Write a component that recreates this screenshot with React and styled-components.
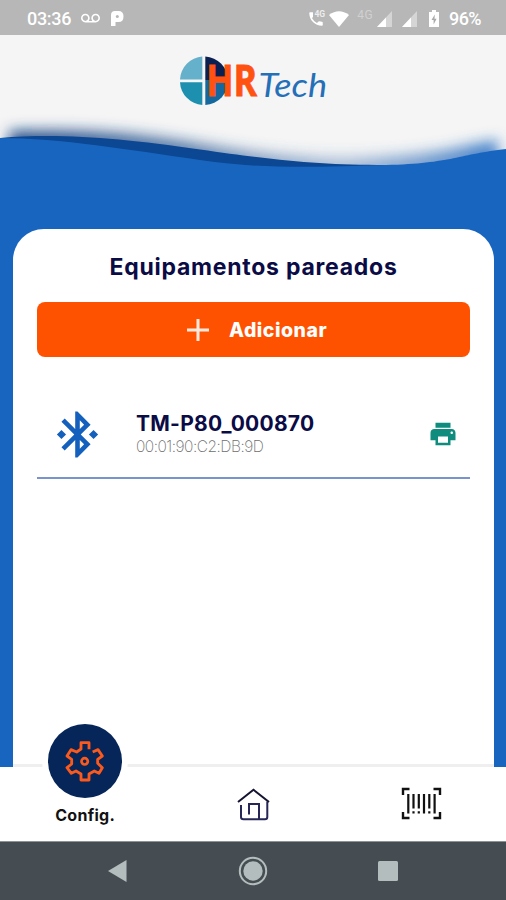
import React from "react";
import styled, { createGlobalStyle } from "styled-components";
import {
  MdBluetoothConnected,
  MdPrint,
  MdVoicemail,
  MdPhoneInTalk,
} from "react-icons/md";

const GlobalStyle = createGlobalStyle`
  * {
    box-sizing: border-box;
  }

  body {
    margin: 0;
    background: #1865c0;
    font-family: Inter, "Liberation Sans", sans-serif;
  }
`;

const Screen = styled.div`
  display: flex;
  flex-direction: column;
  width: 506px;
  height: 900px;
  overflow: hidden;
  background: #1865c0;
`;

const StatusBar = styled.div`
  display: flex;
  flex: none;
  align-items: center;
  justify-content: space-between;
  height: 35px;
  padding: 2px 25px 0 27px;
  background: #b7b7b7;
  color: #fff;
  font-family: Roboto, sans-serif;
`;

const StatusGroup = styled.div`
  display: flex;
  align-items: center;
`;

const StatusText = styled.span`
  font-size: 18px;
  font-weight: 500;
  line-height: 20px;
  letter-spacing: ${(props) => props.$spacing || "-0.3px"};
`;

const StatusIcon = styled.span`
  display: flex;
  align-items: center;
  margin-left: ${(props) => props.$gap}px;
`;

const CallIcon = styled(StatusIcon)`
  position: relative;
  width: 18px;
  height: 18px;
`;

const CallTag = styled.span`
  position: absolute;
  top: 0;
  right: 0;
  padding-left: 1px;
  background: #b7b7b7;
  color: #ececec;
  font-size: 8.5px;
  font-weight: 700;
  line-height: 9px;
`;

const Network = styled.span`
  margin: -7px 0 0 8px;
  color: #d0d0d0;
  font-size: 12px;
  letter-spacing: 0.5px;
`;

const Header = styled.header`
  display: flex;
  flex: none;
  justify-content: center;
  height: 75px;
  padding: 20px 0 0 2px;
  background: #f5f5f5;
`;

const LogoSvg = styled.svg`
  width: 150px;
  height: 55px;
  overflow: visible;
`;

const Wave = styled.svg`
  display: block;
  flex: none;
  width: 506px;
  height: 62px;
`;

const Card = styled.main`
  flex: none;
  width: 481px;
  height: 538px;
  margin: 57px 0 0 13px;
  padding: 23px 24px 0;
  background: #fff;
  border-bottom: 3px solid #efefef;
  border-radius: 31px 31px 0 0;
`;

const Title = styled.h1`
  margin: 0;
  color: #0b0b45;
  font-size: 23px;
  font-weight: 700;
  line-height: 31px;
  letter-spacing: 0.75px;
  text-align: center;
  white-space: nowrap;
`;

const AddButton = styled.button`
  display: flex;
  align-items: center;
  width: 433px;
  height: 55px;
  margin-top: 19px;
  padding: 0 0 0 149px;
  border: none;
  border-radius: 8px;
  background: #ff5200;
  color: #fff;
  font-family: inherit;
  font-size: 19.5px;
  font-weight: 800;
  letter-spacing: 0.5px;
`;

const PlusIcon = styled.svg`
  width: 24px;
  height: 24px;
  margin-right: 19px;
`;

const Device = styled.div`
  display: flex;
  align-items: center;
  height: 88px;
  margin-top: 34px;
  padding: 0 12px 0 13px;
  border-bottom: 2px solid #7b93cc;
`;

const DeviceInfo = styled.div`
  flex: 1;
  margin: 2px 0 0 31px;
`;

const DeviceName = styled.div`
  color: #0b0b45;
  font-size: 21px;
  font-weight: 700;
  line-height: 24px;
  letter-spacing: 0.25px;
`;

const DeviceAddress = styled.div`
  color: #6d6d6d;
  font-size: 15.5px;
  font-weight: 200;
  line-height: 22px;
  letter-spacing: -0.5px;
`;

const TabBar = styled.nav`
  display: grid;
  flex: none;
  grid-template-columns: repeat(3, 1fr);
  height: 74px;
  padding-left: 1px;
  background: #fff;
`;

const Tab = styled.div`
  display: flex;
  flex-direction: column;
  align-items: center;
  padding-top: ${(props) => (props.$active ? "0" : "20px")};
`;

const ActiveCircle = styled.div`
  display: flex;
  flex: none;
  align-items: center;
  justify-content: center;
  position: relative;
  width: 74px;
  height: 74px;
  margin-top: -43px;
  border-radius: 50%;
  background: #06265a;
  box-shadow: 0 0 0 6px #fff;
`;

const TabLabel = styled.span`
  position: relative;
  margin-top: 7px;
  color: #111;
  font-size: 16px;
  font-weight: 700;
  line-height: 20px;
  letter-spacing: 0.3px;
`;

const SystemBar = styled.div`
  display: flex;
  flex: 1;
  align-items: center;
  justify-content: space-between;
  padding: 0 108px 1px 108px;
  border-top: 1px solid #8d9294;
  background: #454d53;
`;

const Logo = () => (
  <LogoSvg viewBox="0 0 150 55">
    <path d="M23.3 24.4H1A24 24 0 0 1 23.3 1.5Z" fill="#65b0ca" />
    <path d="M23.3 27.2H1A24 24 0 0 0 23.3 50Z" fill="#1c90ae" />
    <path d="M26.3 25H49A24 24 0 0 0 26.3 1.5Z" fill="#0b1f50" />
    <path d="M26.3 25H49A24 24 0 0 1 26.3 50Z" fill="#14689d" />
    <text
      x="27.2"
      y="41.4"
      textLength="51"
      lengthAdjust="spacingAndGlyphs"
      fontFamily="Open Sans, sans-serif"
      fontSize="43"
      fontWeight="700"
      fill="#ff5110"
      stroke="#ff5110"
      strokeWidth="0.8"
    >
      HR
    </text>
    <text
      x="79.5"
      y="42"
      textLength="68.5"
      lengthAdjust="spacingAndGlyphs"
      fontFamily="Lato, sans-serif"
      fontSize="33"
      fontStyle="italic"
      fill="#246fb8"
    >
      Tech
    </text>
  </LogoSvg>
);

const HeaderWave = () => (
  <Wave viewBox="0 110 506 62">
    <defs>
      <linearGradient id="shade" x1="0" x2="1" y1="0" y2="0">
        <stop offset="0" stopColor="#123f80" stopOpacity="0.9" />
        <stop offset="0.35" stopColor="#1d4d8c" stopOpacity="0.7" />
        <stop offset="0.68" stopColor="#3e6fae" stopOpacity="0.4" />
        <stop offset="1" stopColor="#1865c0" stopOpacity="0.8" />
      </linearGradient>
      <filter id="soft" x="-5%" y="-60%" width="110%" height="220%">
        <feGaussianBlur stdDeviation="7" />
      </filter>
    </defs>
    <rect y="110" width="506" height="62" fill="#f5f5f5" />
    <path
      d="M9 131C70 128 130 131 200 143S320 160 386 156S460 145 498 140V190H9Z"
      fill="url(#shade)"
      filter="url(#soft)"
    />
    <path
      d="M0 138C60 133 120 138 200 149.5S320 165 386 165V172H0Z"
      fill="#0b4792"
    />
    <path
      d="M0 138C60 138 130 150 200 160S320 166.5 386 165S460 154 506 149V172H0Z"
      fill="#1865c0"
    />
  </Wave>
);

const WifiIcon = () => (
  <svg width="20" height="16" viewBox="0 0 20 16">
    <path d="M0 4Q10-3.5 20 4L10 16Z" fill="#fff" />
  </svg>
);

const SignalIcon = () => (
  <svg width="15" height="16" viewBox="0 0 15 16">
    <path d="M15 0V16H0Z" fill="#d5d5d5" />
    <path d="M9 6.5V16H0Z" fill="#fff" />
  </svg>
);

const BatteryIcon = () => (
  <svg width="10" height="17" viewBox="0 0 10 17">
    <path d="M3 0H7V2H10V17H0V2H3Z" fill="#fff" />
    <path d="M5.8 4.5L2.5 10H4.6V14.5L7.6 8.8H5.5Z" fill="#aaa" />
  </svg>
);

const ParkingIcon = () => (
  <svg width="13" height="15" viewBox="0 0 13 15">
    <path
      d="M0 15V4Q0 0 4 0H7.5Q12.5 0 12.5 5.5T7.5 11H4.5V15Z"
      fill="#fff"
    />
    <circle cx="6.3" cy="5.6" r="1.5" fill="#b7b7b7" />
  </svg>
);

const GearIcon = () => (
  <svg width="40" height="42" viewBox="0 0 120 126">
    <path
      d="M72 28V8H48V27L35 36L18 29L6 48L20 58V72L6 83L19 100L33 93L48 102V120H72V102L88 93L102 100L112 83L98 70V58L112 48L99 29L83 36"
      fill="none"
      stroke="#fb5a1c"
      strokeWidth="8.5"
      strokeLinejoin="round"
    />
    <circle cx="59" cy="64" r="9.5" fill="none" stroke="#fb5a1c" strokeWidth="8" />
  </svg>
);

const HomeIcon = () => (
  <svg width="35" height="35" viewBox="0 0 35 35" fill="none" strokeWidth="2">
    <path
      d="M5 18V30Q5 32.3 7.5 32.3H29Q31.3 32.3 31.3 30V14.5M23 32V17H13V27.5"
      stroke="#262657"
    />
    <path d="M2 15L17.5 2.8L33 15" stroke="#141432" />
  </svg>
);

const BarcodeIcon = () => (
  <svg width="41" height="33" viewBox="0 0 41 33" fill="none" stroke="#111">
    <path
      d="M2 8V2H8.5M32.5 2H39V8M39 25V31H32.5M8.5 31H2V25"
      strokeWidth="2.4"
    />
    <path
      d="M7.3 7V26.5M12.5 7V21.5M17.8 7V21.5M23 7V26.5M28.3 7V21.5M33.6 7V26.5M12.5 24.3V26.5M17.8 24.3V26.5M28.3 24.3V26.5"
      strokeWidth="2.2"
    />
  </svg>
);

const App = () => {
  return (
    <>
      <GlobalStyle />
      <Screen>
        <StatusBar>
          <StatusGroup>
            <StatusText>03:36</StatusText>
            <StatusIcon $gap={10}>
              <MdVoicemail size={19} />
            </StatusIcon>
            <StatusIcon $gap={11}>
              <ParkingIcon />
            </StatusIcon>
          </StatusGroup>
          <StatusGroup>
            <CallIcon $gap={0}>
              <MdPhoneInTalk size={18} />
              <CallTag>4G</CallTag>
            </CallIcon>
            <StatusIcon $gap={4}>
              <WifiIcon />
            </StatusIcon>
            <Network>4G</Network>
            <StatusIcon $gap={4}>
              <SignalIcon />
            </StatusIcon>
            <StatusIcon $gap={10}>
              <SignalIcon />
            </StatusIcon>
            <StatusIcon $gap={12}>
              <BatteryIcon />
            </StatusIcon>
            <StatusIcon $gap={10}>
              <StatusText $spacing="-0.6px">96%</StatusText>
            </StatusIcon>
          </StatusGroup>
        </StatusBar>
        <Header>
          <Logo />
        </Header>
        <HeaderWave />
        <Card>
          <Title>Equipamentos pareados</Title>
          <AddButton>
            <PlusIcon viewBox="0 0 24 24">
              <path d="M12 1V23M1 12H23" stroke="#ffe9df" strokeWidth="3" />
            </PlusIcon>
            Adicionar
          </AddButton>
          <Device>
            <MdBluetoothConnected size={55} color="#1460bd" />
            <DeviceInfo>
              <DeviceName>TM-P80_000870</DeviceName>
              <DeviceAddress>00:01:90:C2:DB:9D</DeviceAddress>
            </DeviceInfo>
            <MdPrint size={30} color="#0f8c7e" />
          </Device>
        </Card>
        <TabBar>
          <Tab $active>
            <ActiveCircle>
              <GearIcon />
            </ActiveCircle>
            <TabLabel>Config.</TabLabel>
          </Tab>
          <Tab>
            <HomeIcon />
          </Tab>
          <Tab>
            <BarcodeIcon />
          </Tab>
        </TabBar>
        <SystemBar>
          <svg width="19" height="22" viewBox="0 0 19 22">
            <path d="M0 11L18.5 0V22Z" fill="#b4bdbd" />
          </svg>
          <svg width="30" height="30" viewBox="0 0 30 30">
            <circle cx="15" cy="15" r="13.2" fill="none" stroke="#b4bdbd" strokeWidth="2" />
            <circle cx="15" cy="15" r="9.7" fill="#b4bdbd" />
          </svg>
          <svg width="20" height="20" viewBox="0 0 20 20">
            <rect width="20" height="20" rx="1.5" fill="#b4bdbd" />
          </svg>
        </SystemBar>
      </Screen>
    </>
  );
};

export default App;
